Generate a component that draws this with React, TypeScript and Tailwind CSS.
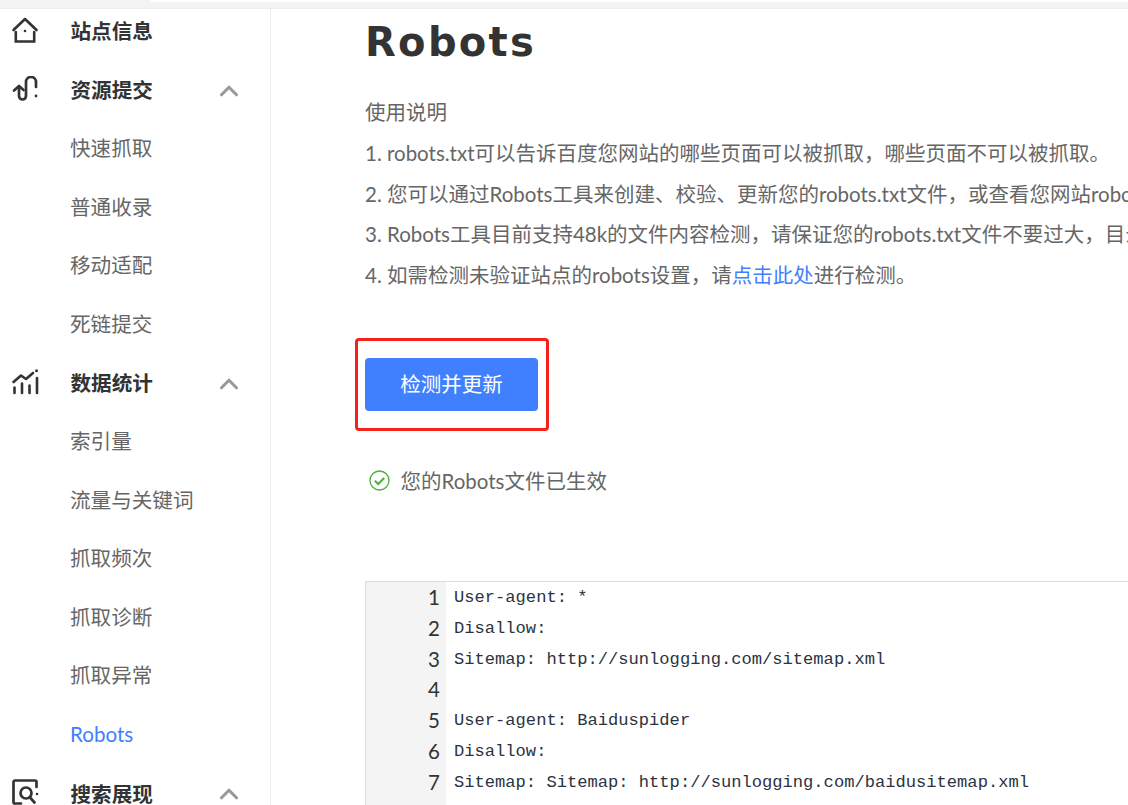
import { ChevronUp } from 'lucide-react';

const cjk = "font-['Lato','Noto_Sans_CJK_SC',sans-serif]";

function HomeIcon() {
  return (
    <svg width="28" height="28" viewBox="0 0 28 28" fill="none" stroke="#333" strokeWidth="2.600" strokeLinecap="round">
      <path d="M2.500 13 14 2 25.500 13" strokeLinejoin="round" />
      <path d="M4.800 15v9.500h18.400V15" />
      <circle cx="14" cy="14" r="1.300" fill="#333" stroke="none" />
    </svg>
  );
}

function SubmitIcon() {
  return (
    <svg width="28" height="28" viewBox="0 0 28 28" fill="none" stroke="#333" strokeWidth="2.700" strokeLinecap="round" strokeLinejoin="round">
      <path d="M3 14.500 8 10l4.500 4" />
      <path d="M8 11v9a3.500 3.500 0 0 0 7 0V6a5 5 0 0 1 10 0v5" />
      <circle cx="25" cy="20" r="1.400" fill="#333" stroke="none" />
    </svg>
  );
}

function ChartIcon() {
  return (
    <svg width="28" height="28" viewBox="0 0 28 28" fill="none" stroke="#333" strokeWidth="2.600" strokeLinecap="round" strokeLinejoin="round">
      <path d="M2.500 13 10 6.500l5 3.500 7-6" />
      <path d="M3.500 18.500V24M11 14.500V24M18.500 16.500V24M26 9v15" />
      <circle cx="25.500" cy="1.800" r="1.500" fill="#333" stroke="none" />
    </svg>
  );
}

function SearchIcon() {
  return (
    <svg width="28" height="28" viewBox="0 0 28 28" fill="none" stroke="#333" strokeWidth="2.700" strokeLinecap="round">
      <path d="M25.500 8V3a1.500 1.500 0 0 0-1.500-1.500H4A1.500 1.500 0 0 0 2.500 3v20A1.500 1.500 0 0 0 4 24.500h6" />
      <circle cx="15" cy="14" r="5.500" />
      <path d="M19 18.500l4.500 5" />
      <circle cx="26" cy="15" r="1.300" fill="#333" stroke="none" />
    </svg>
  );
}

function NavGroup({ icon, label, arrow }: { icon: React.ReactNode; label: string; arrow?: boolean }) {
  return (
    <div className="h-[58.600px] flex items-center">
      <div className="w-[70.500px] pl-[11px] flex items-center">{icon}</div>
      <span className={`text-[20.600px] font-bold text-[#333] ${arrow ? 'mt-[2px]' : ''}`}>{label}</span>
      {arrow && <ChevronUp className="ml-auto mr-[26px] mt-[2px] text-[#999]" size={30} strokeWidth={2.500} />}
    </div>
  );
}

function NavItem({ label, active }: { label: string; active?: boolean }) {
  return (
    <div className={`h-[58.600px] flex items-center pl-[70px] text-[20.600px] ${active ? 'text-[#4080ff]' : 'text-[#666]'}`}>
      {label}
    </div>
  );
}

const codeLines = [
  'User-agent: *',
  'Disallow:',
  'Sitemap: http://sunlogging.com/sitemap.xml',
  '',
  'User-agent: Baiduspider',
  'Disallow:',
  'Sitemap: Sitemap: http://sunlogging.com/baidusitemap.xml',
];

export default function App() {
  return (
    <div className={`w-[1128px] h-[805px] overflow-hidden flex flex-col bg-white ${cjk}`}>
      <div className="h-[9px] shrink-0 bg-[#f3f3f3] border-b border-[#ececec]">
        <div className="ml-[150px] h-[2px] bg-white rounded-bl-[4px]" />
      </div>
      <div className="flex flex-1 min-h-0">
        <aside className="w-[271px] shrink-0 border-r border-[#eeeeee] overflow-hidden">
          <div className="-mt-[7px]">
            <NavGroup icon={<HomeIcon />} label="站点信息" />
            <NavGroup icon={<SubmitIcon />} label="资源提交" arrow />
            <NavItem label="快速抓取" />
            <NavItem label="普通收录" />
            <NavItem label="移动适配" />
            <NavItem label="死链提交" />
            <NavGroup icon={<ChartIcon />} label="数据统计" arrow />
            <NavItem label="索引量" />
            <NavItem label="流量与关键词" />
            <NavItem label="抓取频次" />
            <NavItem label="抓取诊断" />
            <NavItem label="抓取异常" />
            <NavItem label="Robots" active />
            <NavGroup icon={<SearchIcon />} label="搜索展现" arrow />
          </div>
        </aside>
        <main className="flex-1 min-w-0 overflow-hidden pl-[94px]">
          <h1 className="h-[65px] flex items-center font-['DejaVu_Sans',sans-serif] text-[40px] font-bold tracking-[2.300px] text-[#333]">
            Robots
          </h1>
          <div className="mt-[18px] text-[20.500px] leading-[40.800px] text-[#666] whitespace-nowrap">
            <p>使用说明</p>
            <p>1. robots.txt可以告诉百度您网站的哪些页面可以被抓取，哪些页面不可以被抓取。</p>
            <p>2. 您可以通过Robots工具来创建、校验、更新您的robots.txt文件，或查看您网站robots.txt文件在百度的生效情况。</p>
            <p>3. Robots工具目前支持48k的文件内容检测，请保证您的robots.txt文件不要过大，目录最长不超过250个字符。</p>
            <p>
              4. 如需检测未验证站点的robots设置，请<span className="text-[#4080ff]">点击此处</span>进行检测。
            </p>
          </div>
          <div className="relative mt-[62px] w-[173px]">
            <button className="w-[173px] h-[53px] rounded-[4px] bg-[#4080ff] text-white text-[20.500px]">检测并更新</button>
            <div className="absolute -left-[10px] -top-[20px] w-[194px] h-[93px] border-[3px] border-[#f5221b] rounded-[4px]" />
          </div>
          <div className="mt-[56px] h-[28px] flex items-center pl-[4px] gap-[11px] text-[20.500px] text-[#666]">
            <svg width="21" height="21" viewBox="0 0 21 21" fill="none">
              <circle cx="10.500" cy="10.500" r="9.500" stroke="#52ad3e" strokeWidth="1.300" />
              <path d="M5.800 10.800l3.400 3.200 6-6" stroke="#52ad3e" strokeWidth="2" />
            </svg>
            <span className="-ml-[0.500px]">您的Robots文件已生效</span>
          </div>
          <div className="mt-[86px] flex h-[400px] border-l border-t border-[#dddddd]">
            <div className="w-[80px] shrink-0 bg-[#f4f4f4] pr-[6px] text-right text-[20.500px] leading-[30.800px] text-[#333]">
              {codeLines.map((_, i) => (
                <div key={i} className="h-[30.800px]">{i + 1}</div>
              ))}
            </div>
            <div className="pl-[8px] pt-[1px] font-['Liberation_Mono',monospace] text-[17.130px] leading-[30.800px] text-[#2b3340] whitespace-pre">
              {codeLines.map((line, i) => (
                <div key={i} className="h-[30.800px]">{line}</div>
              ))}
            </div>
          </div>
        </main>
      </div>
    </div>
  );
}
